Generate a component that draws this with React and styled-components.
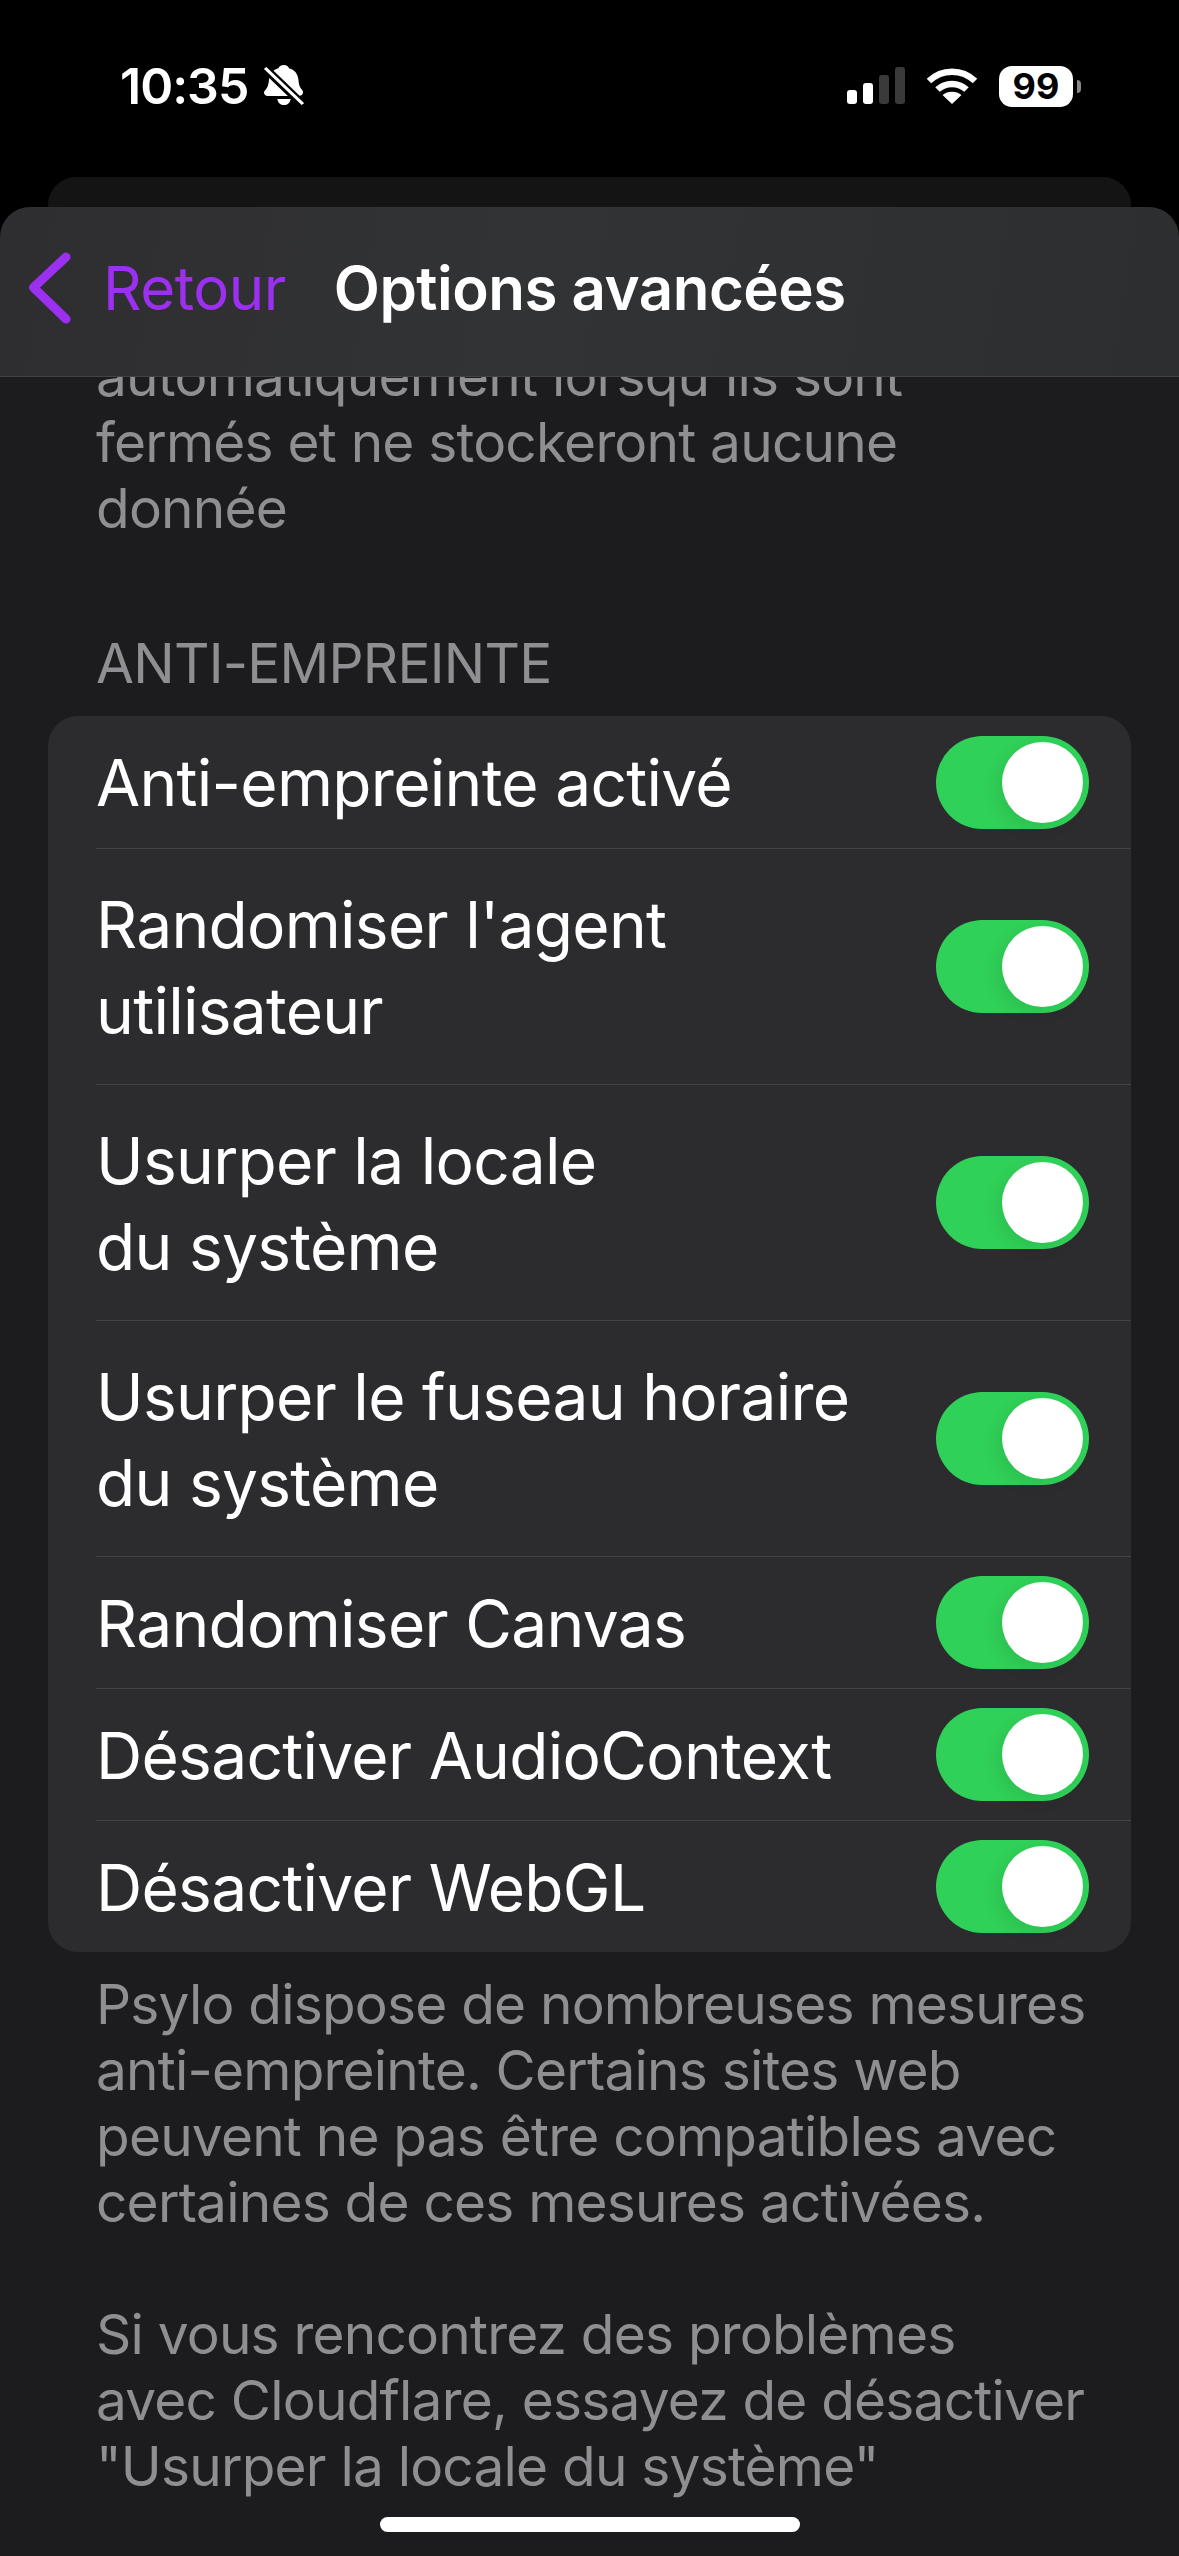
import React from "react"
import styled, { createGlobalStyle } from "styled-components"

const GlobalStyle = createGlobalStyle`
  html, body {
    margin: 0;
    background: #000;
  }
  * {
    box-sizing: border-box;
  }
`

/*
 * Styles
 */

const Screen = styled.div`
  background: #000;
  color: #fff;
  display: flex;
  flex-direction: column;
  font-family: Inter, "Liberation Sans", sans-serif;
  height: 2556px;
  overflow: hidden;
  position: relative;
  width: 1179px;
`

const StatusBar = styled.div`
  align-items: flex-start;
  display: flex;
  height: 177px;
  justify-content: space-between;
  padding: 56px 98px 0 120px;
`

const StatusLeft = styled.div`
  align-items: center;
  display: flex;
  gap: 16px;
`

const Time = styled.span`
  font-size: 50px;
  font-weight: 600;
  letter-spacing: -1px;
  line-height: 60px;
`

const StatusRight = styled.div`
  align-items: center;
  display: flex;
  gap: 21px;
  height: 60px;
`

const Battery = styled.div`
  align-items: center;
  display: flex;
  gap: 4px;
`

const BatteryBody = styled.div`
  align-items: center;
  background: #fff;
  border-radius: 13px;
  color: #000;
  display: flex;
  font-size: 36px;
  font-weight: 700;
  height: 41px;
  justify-content: center;
  width: 74px;
`

const BatteryNub = styled.div`
  background: #8a8a8a;
  border-radius: 0 5px 5px 0;
  height: 13px;
  width: 4px;
`

const BackSheet = styled.div`
  background: #141415;
  border-radius: 28px 28px 0 0;
  flex: none;
  height: 30px;
  margin: 0 48px;
`

const NavBar = styled.div`
  align-items: center;
  background: linear-gradient(100deg, #2e2e30, #323335 45%, #2d2e30);
  border-bottom: 1px solid #434345;
  border-radius: 30px 30px 0 0;
  display: flex;
  flex: none;
  height: 170px;
  padding: 0 0 8px 29px;
`

const BackLink = styled.div`
  align-items: center;
  color: #9b30f0;
  display: flex;
  font-size: 60px;
  gap: 32px;
  letter-spacing: -0.5px;
`

const NavTitle = styled.div`
  font-size: 60px;
  font-weight: 600;
  letter-spacing: -0.5px;
  margin-left: 48px;
`

const Content = styled.div`
  background: #1c1c1e;
  flex: 1;
  overflow: hidden;
`

const Note = styled.p`
  color: #8e8e93;
  font-size: 55px;
  letter-spacing: -0.8px;
  line-height: 66px;
  margin: ${(props) => props.$top}px 0 0;
  padding-left: 96px;
  white-space: nowrap;
`

const SectionTitle = styled.div`
  color: #8e8e93;
  font-size: 55px;
  letter-spacing: -0.75px;
  line-height: 66px;
  margin: 89px 0 20px;
  padding-left: 96px;
`

const Card = styled.div`
  background: #2c2c2e;
  border-radius: 30px;
  margin: 0 48px;
  overflow: hidden;
`

const Row = styled.div`
  align-items: center;
  display: flex;
  height: ${(props) => (props.$double ? 236 : 132)}px;
  justify-content: space-between;
  margin-left: 48px;
  padding-right: 42px;

  & + & {
    border-top: 1px solid #434345;
  }
`

const RowLabel = styled.div`
  font-size: 64px;
  letter-spacing: -0.7px;
  line-height: 86px;
  padding-top: 2px;
`

const Toggle = styled.div`
  background: #30d158;
  border-radius: 47px;
  flex: none;
  height: 93px;
  padding: 6px;
  width: 153px;
`

const Knob = styled.div`
  background: #fff;
  border-radius: 50%;
  box-shadow: -6px 6px 16px rgba(0, 0, 0, 0.08);
  height: 81px;
  margin-left: 60px;
  width: 81px;
`

const HomeIndicator = styled.div`
  background: #fff;
  border-radius: 8px;
  bottom: 24px;
  height: 15px;
  left: 380px;
  position: absolute;
  width: 420px;
`

/*
 * Icons
 */

const BellOff = () => (
  <svg width="40" height="42" viewBox="0 0 36 44" preserveAspectRatio="none">
    <path
      fill="#fff"
      d="M18 0c2.500 0 4 1.500 4.500 3.500c5 1.500 8 6 8.500 12c.3 5 1 8 3.500 11c1.500 2 .5 6 -3 6h-28c-3.500 0 -4.500 -4 -2.500 -6c2.500 -3 3 -6 3.500 -11c.5 -6 3.500 -10.500 8.500 -12c.500 -2 2 -3.500 5 -3.500z"
    />
    <path fill="#fff" d="M12 35.500h12c-.5 4 -3 6.500 -6 6.500s-5.500 -2.500 -6 -6.500z" />
    <path stroke="#000" strokeWidth="8" d="M-3 -1L38 45" />
    <path stroke="#fff" strokeWidth="3" d="M1 3L35 41" />
  </svg>
)

const Signal = () => (
  <svg width="58" height="38" viewBox="0 0 58 38">
    <rect x="0" y="23" width="10" height="14" rx="3" fill="#fff" />
    <rect x="16" y="16" width="10" height="21" rx="3" fill="#fff" />
    <rect x="32" y="8" width="10" height="29" rx="3" fill="#3a3a3a" />
    <rect x="48" y="0" width="10" height="37" rx="3" fill="#3a3a3a" />
  </svg>
)

const Wifi = () => (
  <svg width="52" height="38" viewBox="0 0 52 38" fill="none" stroke="#fff" strokeWidth="6.500">
    <path d="M3 14C16 1.500 36 1.500 49 14" />
    <path d="M11.500 22.500C19.500 15 32.500 15 40.500 22.500" />
    <path fill="#fff" stroke="none" d="M26 37L16.500 28C21.500 23.500 30.500 23.500 35.500 28z" />
  </svg>
)

const Chevron = () => (
  <svg width="42" height="72" viewBox="0 0 42 72" fill="none">
    <path
      d="M37 5L4.500 35.500L37 67"
      stroke="#9b30f0"
      strokeWidth="9"
      strokeLinecap="round"
      strokeLinejoin="round"
    />
  </svg>
)

/*
 * Component
 */

const rows = [
  { label: "Anti-empreinte activé" },
  { label: ["Randomiser l'agent", "utilisateur"] },
  { label: ["Usurper la locale", "du système"] },
  { label: ["Usurper le fuseau horaire", "du système"] },
  { label: "Randomiser Canvas" },
  { label: "Désactiver AudioContext" },
  { label: "Désactiver WebGL" },
]

const App = () => (
  <Screen>
    <GlobalStyle />
    <StatusBar>
      <StatusLeft>
        <Time>10:35</Time>
        <BellOff />
      </StatusLeft>
      <StatusRight>
        <Signal />
        <Wifi />
        <Battery>
          <BatteryBody>99</BatteryBody>
          <BatteryNub />
        </Battery>
      </StatusRight>
    </StatusBar>
    <BackSheet />
    <NavBar>
      <BackLink>
        <Chevron />
        Retour
      </BackLink>
      <NavTitle>Options avancées</NavTitle>
    </NavBar>
    <Content>
      <Note $top={-34}>
        automatiquement lorsqu'ils sont
        <br />
        fermés et ne stockeront aucune
        <br />
        donnée
      </Note>
      <SectionTitle>ANTI-EMPREINTE</SectionTitle>
      <Card>
        {rows.map((row) => {
          const double = Array.isArray(row.label)
          return (
            <Row key={double ? row.label[0] : row.label} $double={double}>
              <RowLabel>
                {double ? (
                  <>
                    {row.label[0]}
                    <br />
                    {row.label[1]}
                  </>
                ) : (
                  row.label
                )}
              </RowLabel>
              <Toggle>
                <Knob />
              </Toggle>
            </Row>
          )
        })}
      </Card>
      <Note $top={19}>
        Psylo dispose de nombreuses mesures
        <br />
        anti-empreinte. Certains sites web
        <br />
        peuvent ne pas être compatibles avec
        <br />
        certaines de ces mesures activées.
      </Note>
      <Note $top={66}>
        Si vous rencontrez des problèmes
        <br />
        avec Cloudflare, essayez de désactiver
        <br />
        "Usurper la locale du système"
      </Note>
    </Content>
    <HomeIndicator />
  </Screen>
)

export default App
